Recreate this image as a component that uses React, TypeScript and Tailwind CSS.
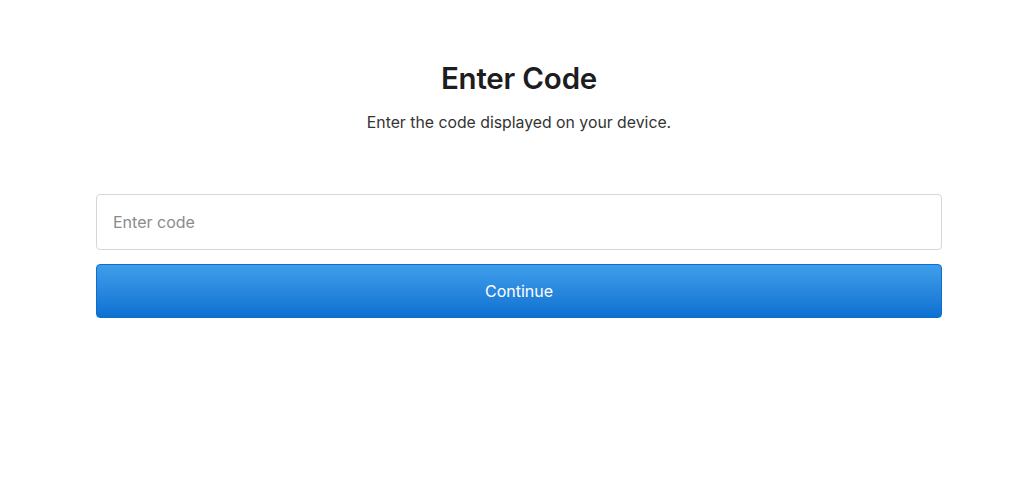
import React from "react";

export default function App() {
  return (
    <div className="w-full min-h-[495px] bg-white" style={{ fontFamily: "Inter, 'Liberation Sans', sans-serif" }}>
      <div className="ml-[96px] mr-[82px]">
        <div className="flex flex-col items-center pt-[61px]">
          <h1 className="text-[29.5px] leading-[34px] font-semibold text-[#1d1d1f] tracking-[-0.2px]">Enter Code</h1>
          <p className="mt-[18px] text-[15.8px] leading-[20px] text-[#333333]">Enter the code displayed on your device.</p>
        </div>
        <div className="mt-[61px] flex flex-col gap-[14px]">
          <input
            type="text"
            placeholder="Enter code"
            className="h-[56px] w-full rounded-[4px] border border-[#d6d6d6] bg-white px-[16px] text-[16px] text-[#333] placeholder:text-[#8b8b8b] outline-none"
          />
          <button className="h-[54px] w-full rounded-[4px] border border-[#0a6fcf] bg-gradient-to-b from-[#3f9eea] to-[#0b71d1] text-[16px] text-white">
            Continue
          </button>
        </div>
      </div>
    </div>
  );
}
